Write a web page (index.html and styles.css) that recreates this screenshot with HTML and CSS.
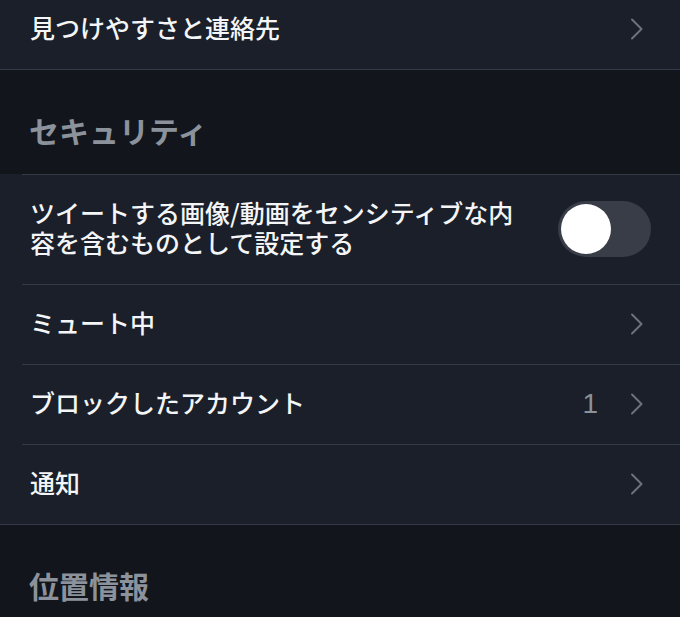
FILE: index.html
```html
<!DOCTYPE html>
<html lang="ja">
<head>
  <meta charset="UTF-8" />
  <meta name="viewport" content="width=device-width, initial-scale=1.0" />
  <title>設定</title>
  <link rel="stylesheet" href="styles.css">
</head>
<body>
  <div class="settings">
    <div class="group group-top">
      <div class="row">
        <span class="label">見つけやすさと連絡先</span>
        <span class="chevron"><svg width="14" height="22" viewBox="0 0 14 22"><path d="M2 1.5 L11.5 11 L2 20.5" fill="none" stroke="#6c737e" stroke-width="2" stroke-linecap="round" stroke-linejoin="round"/></svg></span>
      </div>
    </div>

    <div class="section-title">セキュリティ</div>

    <div class="group">
      <div class="row row-tall">
        <span class="label">ツイートする画像/動画をセンシティブな内容を含むものとして設定する</span>
        <span class="toggle"><span class="knob"></span></span>
      </div>
      <div class="row">
        <span class="label">ミュート中</span>
        <span class="chevron"><svg width="14" height="22" viewBox="0 0 14 22"><path d="M2 1.5 L11.5 11 L2 20.5" fill="none" stroke="#6c737e" stroke-width="2" stroke-linecap="round" stroke-linejoin="round"/></svg></span>
      </div>
      <div class="row">
        <span class="label">ブロックしたアカウント</span>
        <span class="count">1</span>
        <span class="chevron"><svg width="14" height="22" viewBox="0 0 14 22"><path d="M2 1.5 L11.5 11 L2 20.5" fill="none" stroke="#6c737e" stroke-width="2" stroke-linecap="round" stroke-linejoin="round"/></svg></span>
      </div>
      <div class="row">
        <span class="label">通知</span>
        <span class="chevron"><svg width="14" height="22" viewBox="0 0 14 22"><path d="M2 1.5 L11.5 11 L2 20.5" fill="none" stroke="#6c737e" stroke-width="2" stroke-linecap="round" stroke-linejoin="round"/></svg></span>
      </div>
    </div>

    <div class="section-title">位置情報</div>
  </div>
</body>
</html>
```

FILE: styles.css
```css
body {
  margin: 0;
  background-color: #12151b;
  font-family: "Noto Sans CJK JP", "Noto Sans", sans-serif;
  overflow: hidden;
}

.settings {
  margin-top: -11px;
}

.group {
  background-color: #1a1f29;
  border-bottom: 1px solid #353b46;
}

.row {
  display: flex;
  align-items: center;
  height: 80px;
  box-sizing: border-box;
  padding: 0 36px 0 30px;
  position: relative;
}

/* inset divider above each row */
.row::before {
  content: "";
  position: absolute;
  top: 0;
  left: 22px;
  right: 0;
  border-top: 1px solid #353b46;
}

.group-top .row::before {
  display: none;
}

.row-tall {
  height: 110px;
  padding-right: 29px;
}

.label {
  flex: 1;
  color: #f4f5f7;
  font-size: 25px;
  font-weight: 500;
  line-height: 30px;
  padding-bottom: 4px;
}

.row-tall .label {
  margin-right: 30px;
}

.chevron {
  display: flex;
  width: 14px;
  height: 22px;
}

.count {
  color: #8a919b;
  font-family: "Liberation Sans", sans-serif;
  font-size: 28px;
  margin-right: 32px;
}

.toggle {
  flex-shrink: 0;
  width: 93px;
  height: 56px;
  border-radius: 28px;
  background-color: #393d47;
  display: flex;
  align-items: center;
  padding-left: 3px;
  box-sizing: border-box;
}

.knob {
  width: 50px;
  height: 50px;
  border-radius: 50%;
  background-color: #ffffff;
}

.section-title {
  height: 104px;
  box-sizing: border-box;
  padding: 40px 0 0 29px;
  color: #8b929b;
  font-size: 30px;
  font-weight: 700;
  line-height: 40px;
}
```
